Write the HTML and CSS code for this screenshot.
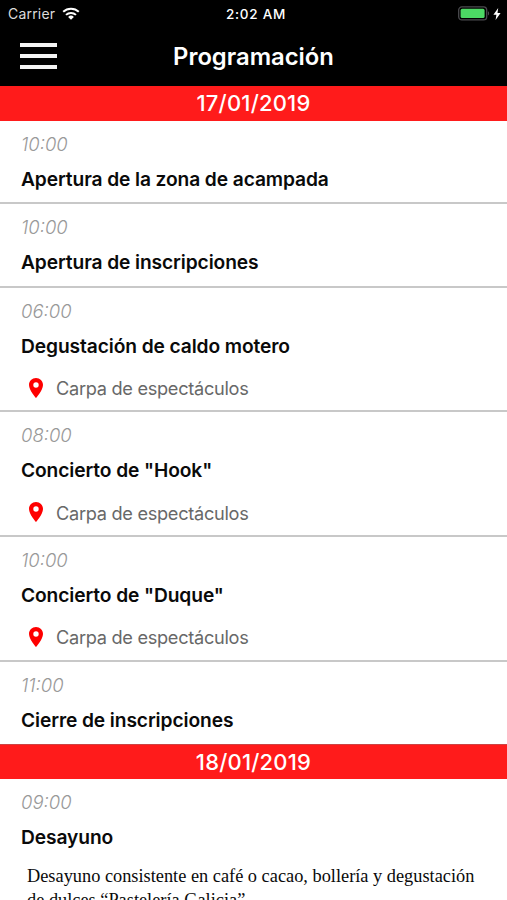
FILE: index.html
```html
<!DOCTYPE html>
<html lang="es">
<head>
    <meta charset="UTF-8">
    <meta name="viewport" content="width=device-width, initial-scale=1.0">
    <title>Programación</title>
    <link rel="stylesheet" href="styles.css">
</head>
<body>
    <!-- Pin shape shared by the places -->
    <svg class="defs" width="0" height="0">
        <symbol id="pin" viewBox="5 2 14 20">
            <path d="M12 2C8.13 2 5 5.13 5 9c0 5.25 7 13 7 13s7-7.75 7-13c0-3.87-3.13-7-7-7zm0 9.7a2.7 2.7 0 0 1 0-5.4 2.7 2.7 0 0 1 0 5.4z"/>
        </symbol>
    </svg>

    <div class="status-bar">
        <div class="status-left">
            <span class="carrier">Carrier</span>
            <svg width="18" height="13" viewBox="0 0 18 13">
                <path d="M1.2 4.8a11.2 11.2 0 0 1 15.6 0M4 7.9a7.2 7.2 0 0 1 10 0" fill="none" stroke="#fff" stroke-width="2"/>
                <path d="M9 12.8L6.1 9.9a4.1 4.1 0 0 1 5.8 0z" fill="#fff"/>
            </svg>
        </div>
        <span class="clock">2:02 AM</span>
        <div class="status-right">
            <svg width="32" height="15" viewBox="0 0 32 15">
                <rect x="0.7" y="0.9" width="28" height="13" rx="3.2" fill="none" stroke="#4b4b4f" stroke-width="1.3"/>
                <rect x="2.6" y="2.8" width="24" height="9.2" rx="1.6" fill="#4cd964"/>
                <path d="M30 5.3c1.5.6 1.5 3.6 0 4.2z" fill="#4b4b4f"/>
            </svg>
            <svg width="8" height="12" viewBox="0 0 8 12">
                <path d="M5.2 0L.4 6.8h3L2.6 12l5-7H4.5z" fill="#fff"/>
            </svg>
        </div>
    </div>

    <header>
        <button class="menu" aria-label="Menú">
            <span></span>
            <span></span>
            <span></span>
        </button>
        <h1>Programación</h1>
    </header>

    <main>
        <h2 class="day">17/01/2019</h2>
        <div class="event">
            <div class="time">10:00</div>
            <div class="title">Apertura de la zona de acampada</div>
        </div>
        <div class="event">
            <div class="time">10:00</div>
            <div class="title">Apertura de inscripciones</div>
        </div>
        <div class="event">
            <div class="time">06:00</div>
            <div class="title">Degustación de caldo motero</div>
            <div class="place"><svg class="pin"><use href="#pin"/></svg><span>Carpa de espectáculos</span></div>
        </div>
        <div class="event">
            <div class="time">08:00</div>
            <div class="title">Concierto de "Hook"</div>
            <div class="place"><svg class="pin"><use href="#pin"/></svg><span>Carpa de espectáculos</span></div>
        </div>
        <div class="event">
            <div class="time">10:00</div>
            <div class="title">Concierto de "Duque"</div>
            <div class="place"><svg class="pin"><use href="#pin"/></svg><span>Carpa de espectáculos</span></div>
        </div>
        <div class="event last">
            <div class="time">11:00</div>
            <div class="title">Cierre de inscripciones</div>
        </div>

        <h2 class="day">18/01/2019</h2>
        <div class="event">
            <div class="time">09:00</div>
            <div class="title">Desayuno</div>
            <p class="description">Desayuno consistente en café o cacao, bollería y degustación<br>de dulces “Pastelería Galicia”</p>
        </div>
    </main>
</body>
</html>
```
FILE: styles.css
```css
* {
    box-sizing: border-box;
}

body {
    margin: 0;
    height: 100vh;
    overflow: hidden;
    background: #fff;
    color: #0a0a0a;
    font-family: Inter, Roboto, sans-serif;
    white-space: nowrap;
}

.defs {
    display: block;
}

/* Status bar */
.status-bar {
    display: grid;
    grid-template-columns: 1fr auto 1fr;
    align-items: center;
    height: 27px;
    padding: 0 6px 0 8px;
    background: #000;
    color: #fff;
    font-size: 14px;
}

.status-left,
.status-right {
    display: flex;
    align-items: center;
}

.status-left {
    gap: 7px;
    color: #dcdcdc;
    letter-spacing: 0.2px;
}

.status-right {
    justify-content: flex-end;
    gap: 3px;
}

.clock {
    padding-left: 3px;
    font-weight: 500;
    font-size: 13.5px;
    letter-spacing: 0.75px;
}

/* Title bar */
header {
    display: grid;
    grid-template-columns: 58px 1fr 58px;
    align-items: center;
    height: 59px;
    background: #000;
    color: #fff;
}

.menu {
    display: flex;
    flex-direction: column;
    gap: 7px;
    width: 57px;
    padding: 0 0 2px 20px;
    border: none;
    background: none;
}

.menu span {
    height: 4px;
    background: #f4f4f4;
}

h1 {
    margin: 0;
    text-align: center;
    font-size: 23.8px;
    line-height: 30px;
    font-weight: 600;
}

/* Schedule */
.day {
    height: 34.6px;
    margin: 0;
    background: #ff1b1b;
    color: #fff;
    text-align: center;
    font-size: 22px;
    line-height: 35px;
    font-weight: 500;
    letter-spacing: 0.2px;
}

.event {
    padding: 11px 21px 11.6px;
    border-bottom: 2px solid #c8c8c8;
}

.event.last {
    padding-bottom: 12px;
    border-bottom: 1px solid #c44;
}

.time {
    height: 24px;
    line-height: 24px;
    font-size: 18.5px;
    font-style: italic;
    font-weight: 300;
    color: #999;
}

.title {
    height: 24px;
    margin-top: 11px;
    line-height: 24px;
    font-size: 19.2px;
    font-weight: 600;
    letter-spacing: -0.1px;
}

.place {
    display: flex;
    align-items: center;
    gap: 13px;
    height: 24px;
    margin-top: 18px;
    margin-bottom: -1px;
    padding-left: 8px;
    font-size: 18.2px;
    letter-spacing: -0.3px;
    color: #686868;
}

.place span {
    padding-top: 1px;
}

.pin {
    width: 14px;
    height: 20px;
    fill: #fe0000;
}

.description {
    margin: 15px 0 0 6px;
    font-family: "Liberation Serif", serif;
    font-size: 18.33px;
    line-height: 24px;
}
```
